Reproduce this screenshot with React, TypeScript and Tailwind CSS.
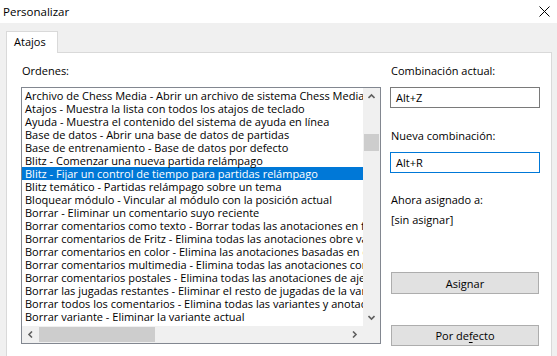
import React from "react";

const items = [
  "Archivo de Chess Media - Abrir un archivo de sistema Chess Media",
  "Atajos - Muestra la lista con todos los atajos de teclado",
  "Ayuda - Muestra el contenido del sistema de ayuda en línea",
  "Base de datos - Abrir una base de datos de partidas",
  "Base de entrenamiento - Base de datos por defecto",
  "Blitz - Comenzar una nueva partida relámpago",
  "Blitz - Fijar un control de tiempo para partidas relámpago",
  "Blitz temático - Partidas relámpago sobre un tema",
  "Bloquear módulo - Vincular al módulo con la posición actual",
  "Borrar - Eliminar un comentario suyo reciente",
  "Borrar comentarios como texto - Borrar todas las anotaciones en forma de texto",
  "Borrar comentarios de Fritz - Elimina todas las anotaciones obre variantes de Fritz",
  "Borrar comentarios en color - Elimina las anotaciones basadas en colores",
  "Borrar comentarios multimedia - Elimina todas las anotaciones con multimedia",
  "Borrar comentarios postales - Elimina todas las anotaciones de ajedrez postal",
  "Borrar las jugadas restantes - Eliminar el resto de jugadas de la variante",
  "Borrar todos los comentarios - Elimina todas las variantes y anotaciones",
  "Borrar variante - Eliminar la variante actual",
];

const SELECTED = 6;

function Chevron({ dir }: { dir: "up" | "down" | "left" | "right" }) {
  const paths: Record<string, string> = {
    up: "M0.5 5 L3.5 2 L6.5 5",
    down: "M0.5 2 L3.5 5 L6.5 2",
    left: "M5 0.5 L2 3.5 L5 6.5",
    right: "M2 0.5 L5 3.5 L2 6.5",
  };
  return (
    <svg width="7" height="7" viewBox="0 0 7 7" className="block">
      <path d={paths[dir]} fill="none" stroke="#606060" strokeWidth="1.6" />
    </svg>
  );
}

export default function App() {
  return (
    <div className="w-[557px] h-[356px] overflow-hidden bg-[#f0f0f0] flex flex-col font-['Open_Sans',sans-serif] text-[11px] text-black">
      <div className="h-[23px] shrink-0 bg-white flex items-center justify-between pl-[3px] pr-[7px]">
        <span className="text-[11.5px] leading-[15px]">Personalizar</span>
        <svg width="11" height="11" viewBox="0 0 11 11" className="block">
          <path d="M0.5 0.5 L10.5 10.5 M10.5 0.5 L0.5 10.5" stroke="#000" strokeWidth="1" />
        </svg>
      </div>
      <div className="flex flex-col pl-[6px] pt-[8px]">
        <div className="relative z-10 -mb-px w-[52px] h-[22px] bg-white border border-b-0 border-[#d9d9d9] pl-[7px] leading-[20px]">
          Atajos
        </div>
        <div className="w-[546px] h-[320px] bg-white border border-[#d9d9d9] flex">
          <div className="ml-[14px] flex flex-col">
            <div className="mt-[10px] pl-px leading-[15px]">Ordenes:</div>
            <div className="mt-[9px] w-[360px] h-[257px] border border-[#828790] flex flex-col">
              <div className="flex flex-1 min-h-0">
                <div className="flex-1 min-w-0 overflow-hidden pt-px">
                  {items.map((t, i) => (
                    <div
                      key={t}
                      className={
                        i === SELECTED
                          ? "h-[13px] leading-[13px] whitespace-nowrap pl-[3px] bg-[#0078d7] text-white"
                          : "h-[13px] leading-[13px] whitespace-nowrap pl-[3px]"
                      }
                    >
                      {t}
                    </div>
                  ))}
                </div>
                <div className="w-[17px] bg-[#f0f0f0] flex flex-col">
                  <div className="h-[17px] flex items-center justify-center">
                    <Chevron dir="up" />
                  </div>
                  <div className="h-[29px]" />
                  <div className="h-[17px] mx-px bg-[#cdcdcd]" />
                  <div className="flex-1" />
                  <div className="h-[17px] flex items-center justify-center">
                    <Chevron dir="down" />
                  </div>
                </div>
              </div>
              <div className="h-[17px] flex bg-[#f0f0f0]">
                <div className="flex-1 flex">
                  <div className="w-[17px] flex items-center justify-center">
                    <Chevron dir="left" />
                  </div>
                  <div className="w-[116px] my-px bg-[#cdcdcd]" />
                  <div className="flex-1" />
                  <div className="w-[17px] flex items-center justify-center">
                    <Chevron dir="right" />
                  </div>
                </div>
                <div className="w-[17px]" />
              </div>
            </div>
          </div>
          <div className="ml-[9px] w-[150px] flex flex-col">
            <div className="mt-[10px] pl-px leading-[15px]">Combinación actual:</div>
            <div className="mt-[9px] h-[21px] border border-[#7a7a7a] flex items-center pl-[5px] leading-[15px]">
              Alt+Z
            </div>
            <div className="mt-[20px] pl-px leading-[15px]">Nueva combinación:</div>
            <div className="mt-[9px] h-[21px] border border-[#0078d7] flex items-center pl-[5px] leading-[15px]">
              Alt+R
            </div>
            <div className="mt-[19px] pl-px leading-[15px]">Ahora asignado a:</div>
            <div className="mt-[5px] pl-px leading-[15px]">[sin asignar]</div>
            <div className="mt-[45px] ml-px w-[148px] h-[22px] bg-[#e1e1e1] border border-[#adadad] flex items-center justify-center leading-[15px]">
              Asignar
            </div>
            <div className="mt-[31px] ml-px w-[148px] h-[21px] bg-[#e1e1e1] border border-[#adadad] flex items-center justify-center leading-[15px]">
              <span>
                Por de<span className="underline underline-offset-2">f</span>ecto
              </span>
            </div>
          </div>
        </div>
      </div>
    </div>
  );
}
